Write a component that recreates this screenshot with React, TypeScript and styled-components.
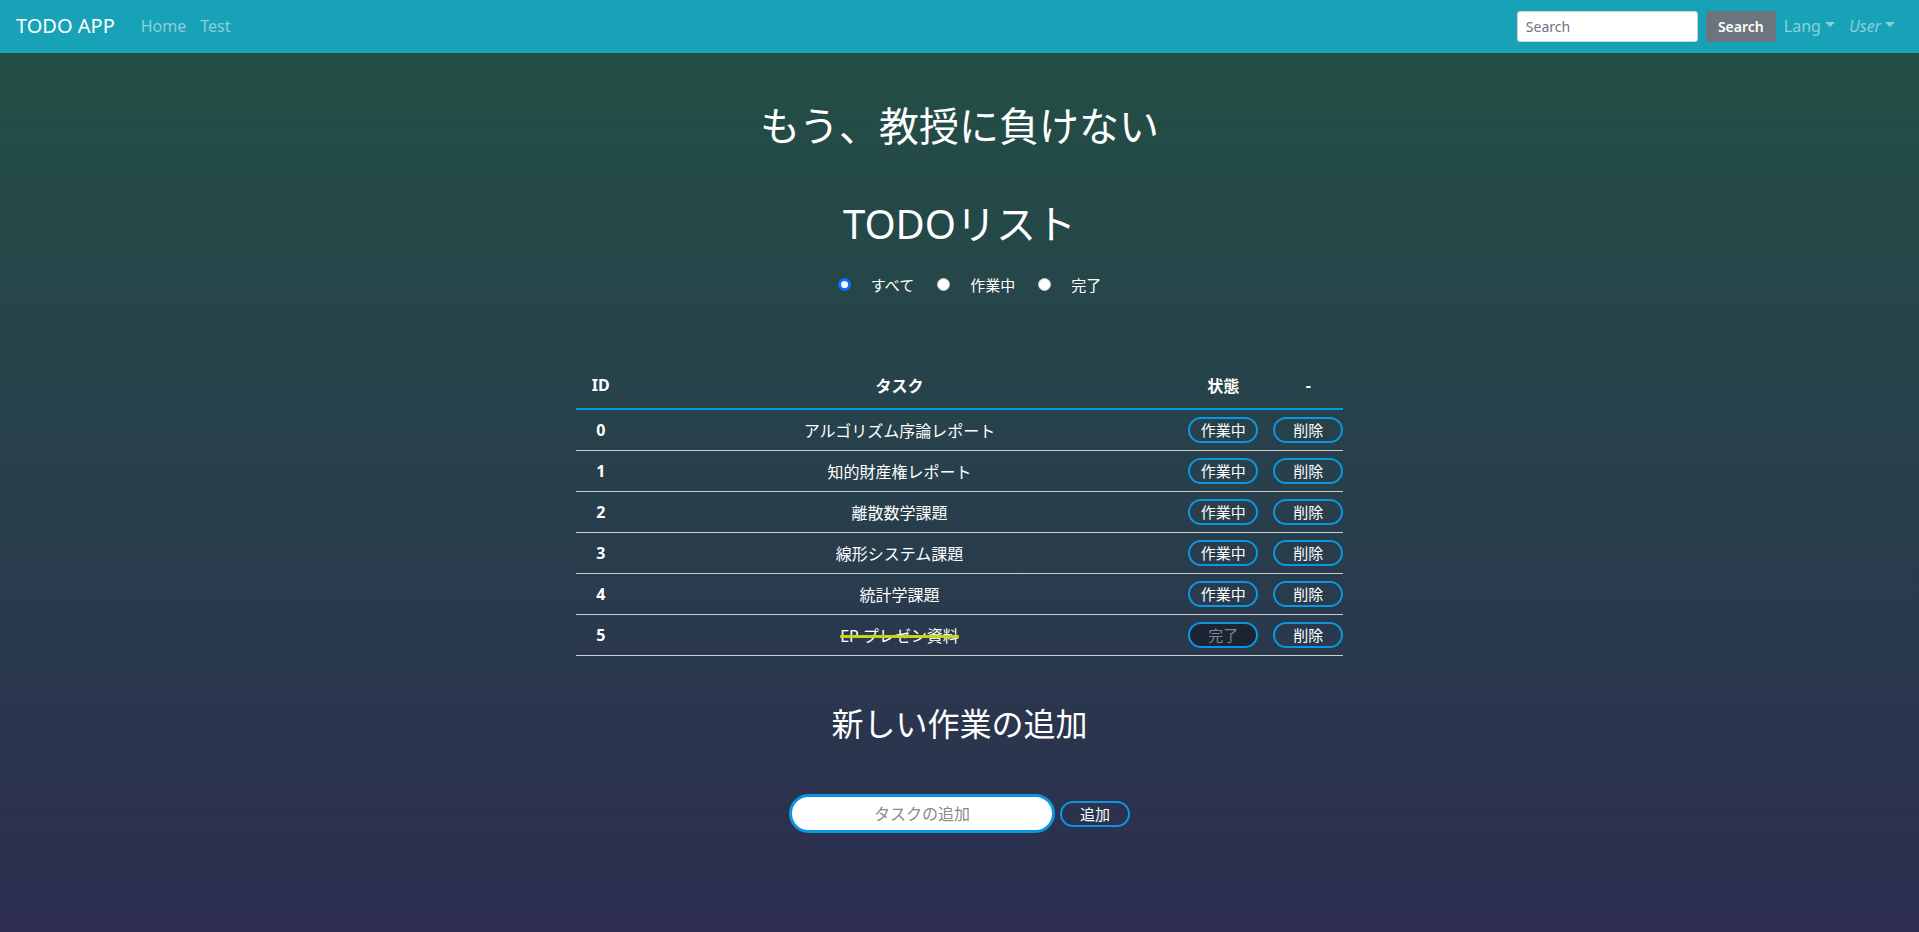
import React, { useState } from "react";
import styled, { createGlobalStyle, css } from "styled-components";

const GlobalStyle = createGlobalStyle`
  html, body { margin: 0; padding: 0; }
  body {
    font-family: "Segoe UI", "Noto Sans", "Noto Sans CJK JP", sans-serif;
    color: #fff;
    background: #2c2d4f;
  }
  * { box-sizing: border-box; }
`;

const Navbar = styled.nav`
  height: 53px;
  background: #17a2b8;
  display: flex;
  align-items: center;
  padding: 0 10px 0 16px;
`;

const Brand = styled.a`
  font-size: 20px;
  color: #fff;
  margin-right: 26px;
  text-decoration: none;
  transform: translateY(-1px);
`;

const NavLink = styled.a<{ $italic?: boolean }>`
  font-size: 16px;
  color: rgba(255, 255, 255, 0.5);
  text-decoration: none;
  margin-right: 14px;
  display: inline-flex;
  align-items: center;
  transform: translateY(-1px);
  ${(p) => p.$italic && css`font-style: italic;`}
`;

const Caret = styled.span`
  display: inline-block;
  margin-left: 4px;
  border-top: 5px solid rgba(255, 255, 255, 0.5);
  border-left: 5px solid transparent;
  border-right: 5px solid transparent;
  transform: translateY(-1px);
`;

const Spacer = styled.div`
  flex: 1;
`;

const SearchForm = styled.form`
  display: flex;
  align-items: center;
  gap: 8px;
  margin-right: 8px;
`;

const SearchInput = styled.input`
  width: 181px;
  height: 31px;
  border: 1px solid #ced4da;
  border-radius: 3px;
  padding: 0 8px;
  font-size: 14px;
  font-family: inherit;
  &::placeholder { color: #6c757d; }
`;

const SearchButton = styled.button`
  width: 70px;
  height: 31px;
  border: none;
  border-radius: 3px;
  background: #6c757d;
  color: #fff;
  font-size: 14px;
  font-weight: 600;
  font-family: inherit;
`;

const Page = styled.main`
  min-height: calc(100vh - 53px);
  background: linear-gradient(180deg, #234e45 0%, #283f4c 50%, #2c2d4f 100%);
  display: flex;
  flex-direction: column;
  align-items: center;
  padding-top: 49px;
  padding-bottom: 60px;
`;

const Title = styled.h1<{ $mt?: number }>`
  margin: ${(p) => p.$mt ?? 0}px 0 0;
  font-size: 40px;
  font-weight: 400;
  line-height: 48px;
  text-align: center;
`;

const SubTitle = styled.h2`
  margin: 49px 0 0;
  font-size: 32px;
  font-weight: 400;
  line-height: 38px;
  text-align: center;
`;

const RadioGroup = styled.div`
  display: flex;
  align-items: center;
  gap: 23px;
  margin: 24px 0 0 20px;
  height: 24px;
`;

const RadioLabel = styled.label`
  display: flex;
  align-items: center;
  gap: 20px;
  font-size: 15px;
  cursor: pointer;
`;

const RadioDot = styled.span<{ $checked: boolean }>`
  width: 13px;
  height: 13px;
  border-radius: 50%;
  background: #fff;
  ${(p) =>
    p.$checked
      ? css`border: 3px solid #0d6efd;`
      : css`border: 1px solid #c8c8c8;`}
`;

const Table = styled.div`
  width: 40%;
  margin-top: 65px;
`;

const cols = css`
  display: grid;
  grid-template-columns: 50px 1fr 100px 70px;
  align-items: center;
`;

const HeadRow = styled.div`
  ${cols};
  height: 49px;
  border-bottom: 2px solid #0a96e0;
  font-weight: 700;
  font-size: 16px;
`;

const Row = styled.div`
  ${cols};
  height: 41px;
  border-bottom: 1px solid #cfcfcf;
  font-size: 16px;
`;

const Cell = styled.div<{ $bold?: boolean }>`
  text-align: center;
  display: flex;
  justify-content: center;
  ${(p) => p.$bold && css`font-weight: 700; font-size: 16px;`}
`;

const TaskText = styled.span<{ $done?: boolean }>`
  ${(p) =>
    p.$done &&
    css`
      text-decoration: line-through;
      text-decoration-color: #c6d41c;
      text-decoration-thickness: 3px;
    `}
`;

const PillButton = styled.button<{ $done?: boolean }>`
  width: 70px;
  height: 26px;
  border: 2px solid #0a96e0;
  border-radius: 13px;
  background: transparent;
  color: #fff;
  font-size: 15px;
  font-family: inherit;
  padding: 0;
  line-height: 20px;
  cursor: pointer;
  ${(p) =>
    p.$done &&
    css`
      background: #1b2432;
      color: #7f858c;
    `}
`;

const AddForm = styled.form`
  display: flex;
  align-items: center;
  gap: 5px;
  margin-top: 51px;
`;

const AddInput = styled.input`
  width: 266px;
  height: 39px;
  border: 3px solid #0a96e0;
  border-radius: 20px;
  background: #fff;
  text-align: center;
  font-size: 16px;
  font-family: inherit;
  outline: none;
  &::placeholder { color: #8a8a8a; }
`;

type Todo = { id: number; title: string; done: boolean };

const todos: Todo[] = [
  { id: 0, title: "アルゴリズム序論レポート", done: false },
  { id: 1, title: "知的財産権レポート", done: false },
  { id: 2, title: "離散数学課題", done: false },
  { id: 3, title: "線形システム課題", done: false },
  { id: 4, title: "統計学課題", done: false },
  { id: 5, title: "EP プレゼン資料", done: true },
];

const filters = ["すべて", "作業中", "完了"];

export default function App() {
  const [filter, setFilter] = useState(0);
  return (
    <>
      <GlobalStyle />
      <Navbar>
        <Brand>TODO APP</Brand>
        <NavLink>Home</NavLink>
        <NavLink>Test</NavLink>
        <Spacer />
        <SearchForm onSubmit={(e) => e.preventDefault()}>
          <SearchInput placeholder="Search" />
          <SearchButton type="submit">Search</SearchButton>
        </SearchForm>
        <NavLink>
          Lang
          <Caret />
        </NavLink>
        <NavLink $italic>
          User
          <Caret />
        </NavLink>
      </Navbar>
      <Page>
        <Title>もう、教授に負けない</Title>
        <Title $mt={50}>TODOリスト</Title>
        <RadioGroup>
          {filters.map((f, i) => (
            <RadioLabel key={f} onClick={() => setFilter(i)}>
              <RadioDot $checked={filter === i} />
              {f}
            </RadioLabel>
          ))}
        </RadioGroup>
        <Table>
          <HeadRow>
            <Cell>ID</Cell>
            <Cell>タスク</Cell>
            <Cell>状態</Cell>
            <Cell>-</Cell>
          </HeadRow>
          {todos.map((t) => (
            <Row key={t.id}>
              <Cell $bold>{t.id}</Cell>
              <Cell>
                <TaskText $done={t.done}>{t.title}</TaskText>
              </Cell>
              <Cell>
                <PillButton $done={t.done}>{t.done ? "完了" : "作業中"}</PillButton>
              </Cell>
              <Cell>
                <PillButton>削除</PillButton>
              </Cell>
            </Row>
          ))}
        </Table>
        <SubTitle>新しい作業の追加</SubTitle>
        <AddForm onSubmit={(e) => e.preventDefault()}>
          <AddInput placeholder="タスクの追加" />
          <PillButton type="submit">追加</PillButton>
        </AddForm>
      </Page>
    </>
  );
}
